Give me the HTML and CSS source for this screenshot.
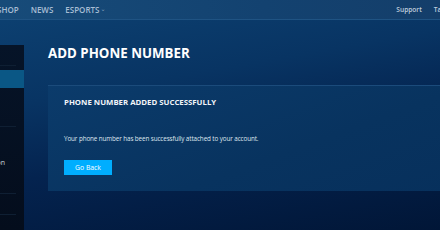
FILE: index.html
```html
<!DOCTYPE html>
<html>
	<head>
		<title>Add Phone Number</title>
		<meta charset="utf-8">
		<link rel="stylesheet" href="styles.css">
	</head>
	<body>
		<div id="topnav">
			<div class="nav_left">
				<a href="#" class="nav_link">Shop</a>
				<a href="#" class="nav_link">News</a>
				<a href="#" class="nav_link">Esports<span class="chevron">&#8964;</span></a>
			</div>
			<div class="nav_right">
				<a href="#" class="nav_link_small">Support</a>
				<a href="#" class="nav_link_small">Talk</a>
			</div>
		</div>
		<div id="layout">
			<div id="sidebar">
				<div class="side_item"></div>
				<div class="side_item active"></div>
				<div class="side_item tall"></div>
				<div class="side_item taller"><span class="side_text">Authentication</span></div>
				<div class="side_item"></div>
			</div>
			<div id="content">
				<h1 class="page_title">Add Phone Number</h1>
				<div class="card">
					<h2 class="card_title">Phone Number Added Successfully</h2>
					<p class="card_text">Your phone number has been successfully attached to your account.</p>
					<a href="#" class="btn_primary">Go Back</a>
				</div>
			</div>
		</div>
	</body>
</html>
```

FILE: styles.css
```css
html, body {
	margin: 0px;
	padding: 0px;
	width: 100%;
	height: 100%;
	overflow: hidden;
}

body {
	font-family: "Open Sans", "DejaVu Sans", sans-serif;
	color: #FFF;
	background: linear-gradient(170deg, #0d4273 0%, #083463 35%, #04234f 60%, #011637 100%);
}

a {
	text-decoration: none;
}

/* Top navigation */
#topnav {
	height: 20px;
	display: flex;
	justify-content: space-between;
	align-items: center;
	background: linear-gradient(90deg, #174b79 0%, #134270 60%, #143e6a 100%);
	border-bottom: 1px solid #1f5383;
	box-sizing: border-box;
	white-space: nowrap;
}

.nav_left {
	display: flex;
	gap: 12px;
	margin-left: -3px;
}

.nav_link {
	font-size: 8px;
	font-weight: 600;
	text-transform: uppercase;
	color: #a7bdd4;
}

.chevron {
	font-size: 6px;
	margin-left: 1px;
	color: #7f9bb8;
	position: relative;
	top: -2px;
}

.nav_right {
	display: flex;
	gap: 12px;
	margin-right: -7px;
}

.nav_link_small {
	font-size: 6.6px;
	font-weight: 600;
	color: #c0cfde;
}

/* Page layout */
#layout {
	display: flex;
	height: 210px;
}

#sidebar {
	width: 24px;
	flex-shrink: 0;
	margin-top: 25px;
	background: linear-gradient(180deg, #061428 0%, #040d1c 100%);
	overflow: hidden;
}

.side_item {
	height: 20px;
	border-bottom: 1px solid #0f1f33;
	margin-right: 8px;
	position: relative;
}

.side_item.active {
	height: 18px;
	margin: 4px 0px 0px 0px;
	background-color: #0a5785;
	border: none;
}

.side_item.tall {
	height: 38px;
}

.side_item.taller {
	height: 66px;
}

.side_text {
	position: absolute;
	right: 11px;
	top: 31px;
	font-size: 7px;
	line-height: 9px;
	color: #c9d3de;
	white-space: nowrap;
}

#content {
	flex: 1;
	padding: 25px 0px 0px 24px;
}

.page_title {
	margin: 0px;
	font-size: 13.3px;
	line-height: 16px;
	font-weight: 700;
	text-transform: uppercase;
}

.card {
	margin-top: 24px;
	margin-right: -20px;
	padding: 11px 16px 16px 16px;
	background: linear-gradient(160deg, #0b3b6b 0%, #08335f 60%, #07305c 100%);
	border-top: 1px solid #1b4b7b;
}

.card_title {
	margin: 0px;
	font-size: 7.8px;
	line-height: 10px;
	font-weight: 700;
	text-transform: uppercase;
	color: #f2f5f9;
}

.card_text {
	margin: 27px 0px 10px 0px;
	font-size: 6.3px;
	letter-spacing: -0.1px;
	line-height: 9px;
	color: #dfe6ee;
}

.btn_primary {
	display: inline-block;
	width: 48px;
	height: 15px;
	line-height: 15px;
	text-align: center;
	font-size: 6.8px;
	color: #FFF;
	background-color: #00aeff;
}
```
